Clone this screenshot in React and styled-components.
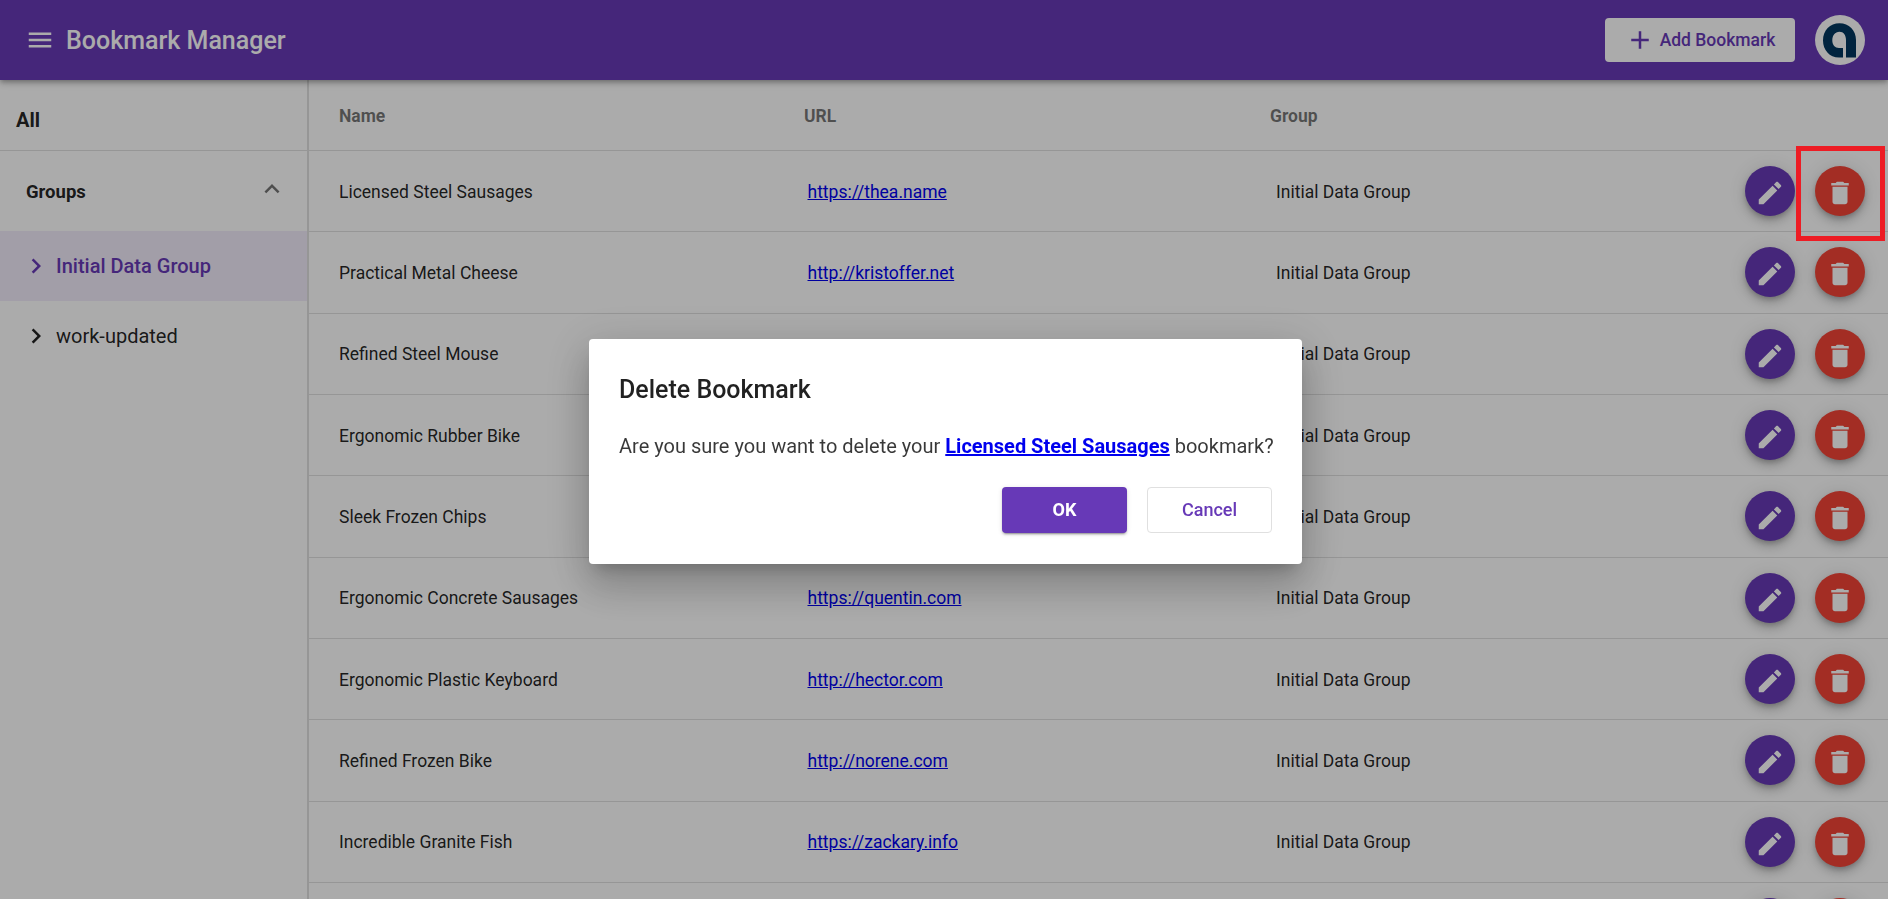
import React from "react";
import styled, { createGlobalStyle } from "styled-components";

const bookmarks = [
    { name: "Licensed Steel Sausages", url: "https://thea.name" },
    { name: "Practical Metal Cheese", url: "http://kristoffer.net" },
    { name: "Refined Steel Mouse", url: "http://adolph.biz" },
    { name: "Ergonomic Rubber Bike", url: "https://marcos.org" },
    { name: "Sleek Frozen Chips", url: "http://lela.net" },
    { name: "Ergonomic Concrete Sausages", url: "https://quentin.com" },
    { name: "Ergonomic Plastic Keyboard", url: "http://hector.com" },
    { name: "Refined Frozen Bike", url: "http://norene.com" },
    { name: "Incredible Granite Fish", url: "https://zackary.info" },
    { name: "Handcrafted Soft Chair", url: "http://lonny.org" },
];

const GlobalStyle = createGlobalStyle`
html, body {
    margin: 0;
    height: 100%;
    overflow: hidden;
    background: #fff;
    font-family: Roboto, "Liberation Sans", sans-serif;
}
* {
    box-sizing: border-box;
}
`;

const MenuIcon = () => (
    <svg viewBox="0 0 24 24" width="30" height="30" fill="currentColor">
        <path d="M3 18h18v-2H3v2zm0-5h18v-2H3v2zm0-7v2h18V6H3z" />
    </svg>
);

const PlusIcon = () => (
    <svg viewBox="0 0 24 24" width="30" height="30" fill="currentColor">
        <path d="M19 13h-6v6h-2v-6H5v-2h6V5h2v6h6v2z" />
    </svg>
);

const EditIcon = () => (
    <svg viewBox="0 0 24 24" width="30" height="30" fill="currentColor">
        <path d="M3 17.25V21h3.75L17.81 9.94l-3.75-3.75L3 17.25zM20.71 7.04c.39-.39.39-1.02 0-1.41l-2.34-2.34c-.39-.39-1.02-.39-1.41 0l-1.83 1.83 3.75 3.75 1.83-1.83z" />
    </svg>
);

const DeleteIcon = () => (
    <svg viewBox="0 0 24 24" width="30" height="30" fill="currentColor">
        <path d="M6 19c0 1.1.9 2 2 2h8c1.1 0 2-.9 2-2V7H6v12zM19 4h-3.5l-1-1h-5l-1 1H5v2h14V4z" />
    </svg>
);

const Chevron = ({ dir }) => (
    <svg viewBox="0 0 24 24" width="30" height="30" fill="currentColor">
        {dir === "up" ? (
            <path d="M7.41 15.41 12 10.83l4.59 4.58L18 14l-6-6-6 6z" />
        ) : (
            <path d="M8.59 16.59 13.17 12 8.59 7.41 10 6l6 6-6 6z" />
        )}
    </svg>
);

const Logo = () => (
    <svg viewBox="0 0 50 50" width="50" height="50">
        <circle cx="25" cy="25" r="25" fill="#fff" />
        <path
            d="M28 42.500H24C14.500 42.500 8 35 8 25.500C8 15.500 15 8.300 24.500 8.300C34 8.300 41 15.500 41 25V42.500H31V25C31 20 28.500 16.700 24.500 16.700C20 16.700 17.300 20.500 17.300 25.500C17.300 30 20 33 24 33H28Z"
            fill="#00375f"
        />
    </svg>
);

const App = () => {
    return (
        <>
            <GlobalStyle />
            <Page>
                <Header>
                    <Brand>
                        <MenuIcon />
                        <Title>Bookmark Manager</Title>
                    </Brand>
                    <HeaderActions>
                        <AddButton>
                            <PlusIcon />
                            Add Bookmark
                        </AddButton>
                        <Avatar>
                            <Logo />
                        </Avatar>
                    </HeaderActions>
                </Header>
                <Body>
                    <Sidebar>
                        <AllRow>All</AllRow>
                        <GroupsRow>
                            <GroupsLabel>Groups</GroupsLabel>
                            <GroupsToggle>
                                <Chevron dir="up" />
                            </GroupsToggle>
                        </GroupsRow>
                        <GroupItem $active>
                            <Chevron />
                            Initial Data Group
                        </GroupItem>
                        <GroupItem>
                            <Chevron />
                            work-updated
                        </GroupItem>
                    </Sidebar>
                    <Content>
                        <HeadRow>
                            <HeadCell>Name</HeadCell>
                            <HeadCell>URL</HeadCell>
                            <HeadCell>Group</HeadCell>
                        </HeadRow>
                        {bookmarks.map((b) => (
                            <Row key={b.name}>
                                <NameCell>{b.name}</NameCell>
                                <UrlCell>
                                    <a href={b.url}>{b.url}</a>
                                </UrlCell>
                                <GroupCell>Initial Data Group</GroupCell>
                                <Actions>
                                    <Fab $color="#6739b7">
                                        <EditIcon />
                                    </Fab>
                                    <Fab $color="#f44336">
                                        <DeleteIcon />
                                    </Fab>
                                </Actions>
                            </Row>
                        ))}
                    </Content>
                </Body>
            </Page>
            <Backdrop>
                <Dialog>
                    <DialogTitle>Delete Bookmark</DialogTitle>
                    <DialogText>
                        Are you sure you want to delete your{" "}
                        <a href="https://thea.name">Licensed Steel Sausages</a> bookmark?
                    </DialogText>
                    <DialogActions>
                        <OkButton>OK</OkButton>
                        <CancelButton>Cancel</CancelButton>
                    </DialogActions>
                </Dialog>
            </Backdrop>
            <Highlight />
        </>
    );
};

const Page = styled.div`
height: 100vh;
overflow: hidden;
display: flex;
flex-direction: column;
`;

const Header = styled.header`
height: 80px;
flex-shrink: 0;
background: #6739b7;
color: #fff;
display: flex;
align-items: center;
justify-content: space-between;
padding: 0 23px 0 25px;
box-shadow: 0 2px 4px -1px rgba(0,0,0,.2), 0 4px 5px rgba(0,0,0,.14), 0 1px 10px rgba(0,0,0,.12);
position: relative;
z-index: 2;
`;

const Brand = styled.div`
display: flex;
align-items: center;
gap: 11px;
`;

const Title = styled.div`
font-size: 25px;
font-weight: 500;
`;

const HeaderActions = styled.div`
display: flex;
align-items: center;
gap: 20px;
`;

const AddButton = styled.button`
width: 190px;
height: 44px;
border: none;
border-radius: 4px;
background: #fff;
color: #6739b7;
font-family: inherit;
font-size: 17.5px;
font-weight: 500;
display: flex;
align-items: center;
justify-content: center;
gap: 5px;
padding: 0;
`;

const Avatar = styled.div`
width: 50px;
height: 50px;
display: flex;
`;

const Body = styled.div`
flex: 1;
display: flex;
min-height: 0;
`;

const Sidebar = styled.aside`
width: 309px;
flex-shrink: 0;
border-right: 2px solid #e0e0e0;
`;

const AllRow = styled.div`
height: 71px;
padding: 10px 0 0 16px;
display: flex;
align-items: center;
font-size: 20px;
font-weight: 700;
color: rgba(0,0,0,.87);
border-bottom: 1px solid #e0e0e0;
`;

const GroupsRow = styled.div`
height: 80px;
padding: 0 20px 0 26px;
display: flex;
align-items: center;
justify-content: space-between;
`;

const GroupsLabel = styled.span`
padding-top: 2px;
font-size: 18.5px;
font-weight: 700;
color: rgba(0,0,0,.87);
`;

const GroupsToggle = styled.span`
display: flex;
margin-top: -5px;
color: rgba(0,0,0,.54);
`;

const GroupItem = styled.div`
height: 70px;
padding-left: 21px;
display: flex;
align-items: center;
gap: 5px;
font-size: 20px;
font-weight: ${({ $active }) => ($active ? 500 : 400)};
color: ${({ $active }) => ($active ? "#6739b7" : "rgba(0,0,0,.87)")};
background: ${({ $active }) => ($active ? "#f2ecfb" : "transparent")};
`;

const Content = styled.main`
flex: 1;
min-width: 0;
`;

const HeadRow = styled.div`
height: 71px;
padding-left: 30px;
display: grid;
grid-template-columns: 465px 466px 1fr;
align-items: center;
border-bottom: 1px solid #e0e0e0;
`;

const HeadCell = styled.div`
padding-top: 2px;
font-size: 17.5px;
font-weight: 700;
color: rgba(0,0,0,.54);
`;

const Row = styled.div`
height: 81.33px;
padding: 0 23px 0 30px;
display: grid;
grid-template-columns: 465px 466px 1fr auto;
align-items: center;
border-bottom: 1px solid #e0e0e0;
font-size: 17.5px;
color: rgba(0,0,0,.87);
`;

const NameCell = styled.div`
padding-top: 1px;
`;

const UrlCell = styled.div`
padding: 1px 0 0 3.5px;
`;

const GroupCell = styled.div`
padding: 1px 0 0 6px;
`;

const Actions = styled.div`
display: flex;
gap: 20px;
`;

const Fab = styled.button`
width: 50px;
height: 50px;
border: none;
border-radius: 50%;
padding: 4px 0 0;
background: ${({ $color }) => $color};
color: #fff;
display: flex;
align-items: center;
justify-content: center;
box-shadow: 0 3px 5px -1px rgba(0,0,0,.2), 0 6px 10px rgba(0,0,0,.14), 0 1px 18px rgba(0,0,0,.12);
`;

const Backdrop = styled.div`
position: fixed;
inset: 0;
z-index: 10;
background: rgba(0,0,0,.33);
display: flex;
align-items: center;
justify-content: center;
`;

const Dialog = styled.div`
width: 713px;
height: 225px;
margin: 3px 0 0 3px;
padding: 35px 30px 0;
background: #fff;
border-radius: 4px;
box-shadow: 0 11px 15px -7px rgba(0,0,0,.2), 0 24px 38px 3px rgba(0,0,0,.14), 0 9px 46px 8px rgba(0,0,0,.12);
`;

const DialogTitle = styled.h2`
margin: 0;
font-size: 25px;
font-weight: 500;
line-height: 32px;
color: rgba(0,0,0,.87);
`;

const DialogText = styled.p`
margin: 26px 0 0;
font-size: 20px;
line-height: 28px;
white-space: nowrap;
color: rgba(0,0,0,.78);
a {
    font-weight: 700;
}
`;

const DialogActions = styled.div`
display: flex;
justify-content: flex-end;
gap: 20px;
margin-top: 27px;
`;

const OkButton = styled.button`
width: 125px;
height: 46px;
border: none;
border-radius: 4px;
background: #6739b7;
color: #fff;
font-family: inherit;
font-size: 18px;
font-weight: 700;
box-shadow: 0 3px 1px -2px rgba(0,0,0,.2), 0 2px 2px rgba(0,0,0,.14), 0 1px 5px rgba(0,0,0,.12);
`;

const CancelButton = styled.button`
width: 125px;
height: 46px;
border: 1px solid #e0e0e0;
border-radius: 4px;
background: #fff;
color: #6739b7;
font-family: inherit;
font-size: 18px;
font-weight: 500;
`;

const Highlight = styled.div`
position: fixed;
left: 1796px;
top: 146px;
width: 89px;
height: 95px;
border: 5px solid #ed1c24;
z-index: 20;
`;

export default App;
